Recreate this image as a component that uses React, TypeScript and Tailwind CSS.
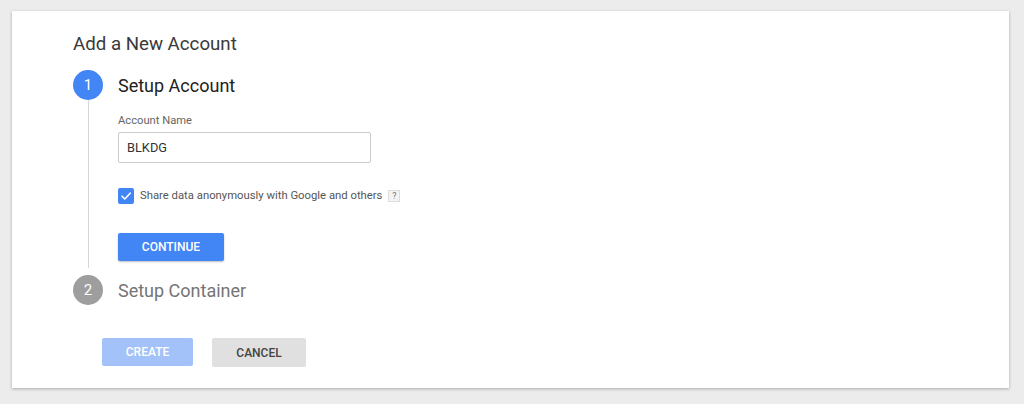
import React from "react";

export default function App() {
  return (
    <div
      className="w-[1024px] h-[404px] bg-[#ececec] pt-[11px] pl-[12px] overflow-hidden"
      style={{ fontFamily: "Roboto, 'Liberation Sans', sans-serif" }}
    >
      <div className="w-[997px] h-[377px] bg-white shadow-[0_1px_3px_rgba(0,0,0,0.28)] pl-[61px] pt-[21px]">
        <h1 className="text-[18.7px] leading-[24px] text-[#3a3a3a] font-normal">Add a New Account</h1>

        <div className="mt-[14px] flex">
          <div className="flex flex-col items-center w-[30px]">
            <div className="w-[30px] h-[30px] rounded-full bg-[#4285f4] text-white text-[15px] flex items-center justify-center">
              1
            </div>
            <div className="w-px flex-1 bg-[#d6d6d6] mb-[7px]"></div>
          </div>
          <div className="pl-[15px] pb-[14px]">
            <div className="h-[30px] flex items-center text-[18px] text-[#212121]">Setup Account</div>
            <div className="mt-[13px] text-[11.2px] leading-[16px] text-[#666666]">Account Name</div>
            <div className="mt-[3px] w-[253px] h-[31px] border border-[#cccccc] rounded-[2px] flex items-center pl-[8px] text-[12.8px] text-[#333333]">
              BLKDG
            </div>
            <div className="mt-[25px] flex items-center h-[16px]">
              <div className="w-[16px] h-[16px] rounded-[2px] bg-[#4285f4] flex items-center justify-center">
                <svg width="12" height="12" viewBox="0 0 12 12" fill="none">
                  <path d="M2 6.2 L4.8 9 L10.2 3.2" stroke="white" strokeWidth="1.6" strokeLinecap="round" strokeLinejoin="round" />
                </svg>
              </div>
              <span className="ml-[6px] text-[11.3px] text-[#555555]">Share data anonymously with Google and others</span>
              <span className="ml-[6px] w-[12px] h-[12px] border border-[#dddddd] bg-[#f3f3f3] text-[9px] leading-[10px] text-[#777777] flex items-center justify-center">
                ?
              </span>
            </div>
            <button className="mt-[29px] w-[106px] h-[28px] rounded-[2px] bg-[#4285f4] text-white text-[12px] font-medium shadow-[0_1px_2px_rgba(0,0,0,0.25)] flex items-center justify-center">
              CONTINUE
            </button>
          </div>
        </div>

        <div className="flex items-center">
          <div className="w-[30px] h-[30px] rounded-full bg-[#9e9e9e] text-white text-[15px] flex items-center justify-center">
            2
          </div>
          <div className="pl-[15px] text-[18px] text-[#757575]">Setup Container</div>
        </div>

        <div className="mt-[33px] ml-[29px] flex gap-[19px]">
          <button className="w-[91px] h-[28px] rounded-[2px] bg-[#a3c2f9] text-white text-[12px] font-medium flex items-center justify-center">
            CREATE
          </button>
          <button className="w-[94px] h-[29px] rounded-[2px] bg-[#e0e0e0] text-[#444444] text-[12px] font-medium flex items-center justify-center">
            CANCEL
          </button>
        </div>
      </div>
    </div>
  );
}
